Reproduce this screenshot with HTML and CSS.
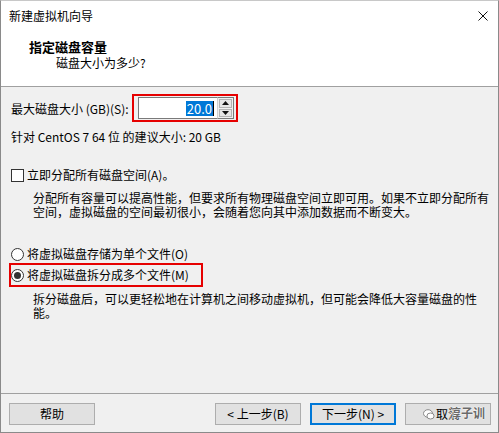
FILE: index.html
```html
<!DOCTYPE html>
<html>
  <head>
    <title>新建虚拟机向导</title>
    <link rel="stylesheet" href="styles.css">
  </head>
  <body>
    <div class="window">
      <div class="titlebar">
        <span class="caption">新建虚拟机向导</span>
        <svg class="close" width="10" height="10" viewBox="0 0 10 10">
          <path d="M0.5 0.5 L9.5 9.5 M9.5 0.5 L0.5 9.5" stroke="#111" stroke-width="1" fill="none" />
        </svg>
      </div>

      <div class="header">
        <h1 class="title">指定磁盘容量</h1>
        <p class="subtitle">磁盘大小为多少?</p>
      </div>

      <div class="content">
        <div class="size-row">
          <span class="label">最大磁盘大小 (GB)(S):</span>
          <div class="mark">
            <div class="spinbox">
              <div class="edit"><span class="selected">20.0</span><span class="caret"></span></div>
              <div class="spin">
                <div class="spin-btn">
                  <svg width="7" height="4" viewBox="0 0 7 4"><path d="M3.5 0 L7 4 L0 4 Z" fill="#111" /></svg>
                </div>
                <div class="spin-btn">
                  <svg width="7" height="4" viewBox="0 0 7 4"><path d="M0 0 L7 0 L3.5 4 Z" fill="#111" /></svg>
                </div>
              </div>
            </div>
          </div>
        </div>

        <p class="hint">针对 CentOS 7 64 位 的建议大小: 20 GB</p>

        <div class="option check-row">
          <span class="checkbox"></span>
          <span>立即分配所有磁盘空间(A)。</span>
        </div>
        <p class="desc">分配所有容量可以提高性能，但要求所有物理磁盘空间立即可用。如果不立即分配所有空间，虚拟磁盘的空间最初很小，会随着您向其中添加数据而不断变大。</p>

        <div class="option radio-row first">
          <span class="radio"></span>
          <span>将虚拟磁盘存储为单个文件(O)</span>
        </div>
        <div class="radio-mark">
          <div class="option radio-row">
            <span class="radio checked"></span>
            <span>将虚拟磁盘拆分成多个文件(M)</span>
          </div>
        </div>
        <p class="desc second">拆分磁盘后，可以更轻松地在计算机之间移动虚拟机，但可能会降低大容量磁盘的性能。</p>
      </div>

      <div class="footer">
        <button class="btn">帮助</button>
        <div class="spacer"></div>
        <button class="btn">&lt; 上一步(B)</button>
        <button class="btn default">下一步(N) &gt;</button>
        <button class="btn cancel">取消
          <svg class="wm-icon" width="12" height="11" viewBox="0 0 12 11">
            <ellipse cx="5" cy="4.5" rx="4.5" ry="3.8" fill="#fff" stroke="#8a8a8a" stroke-width="1" />
            <ellipse cx="7.5" cy="7" rx="3.6" ry="3" fill="#fff" stroke="#8a8a8a" stroke-width="1" />
          </svg>
          <span class="wm-text">淳子训</span>
        </button>
      </div>
    </div>
  </body>
</html>
```

FILE: styles.css
```css
body {
  margin: 0;
  font-family: "Noto Sans CJK SC", "Liberation Sans", sans-serif;
  font-size: 12px;
  color: #000;
}

.window {
  box-sizing: border-box;
  width: 499px;
  height: 433px;
  border: 1px solid #8a8a8a;
  border-top-color: #c8c8c8;
  display: flex;
  flex-direction: column;
  background: #f0f0f0;
}

.titlebar {
  height: 29px;
  background: #fff;
  display: flex;
  align-items: center;
  padding: 0 10px 0 8px;
}

.caption {
  flex: 1;
  line-height: 16px;
}

.close {
  display: block;
}

.header {
  background: #fff;
  border-bottom: 1px solid #a0a0a0;
  height: 57px;
  box-sizing: border-box;
  padding: 8px 0 0 28px;
}

.title {
  margin: 0;
  font-size: 13px;
  font-weight: bold;
  line-height: 17px;
}

.subtitle {
  margin: 0 0 0 27px;
  line-height: 16px;
}

.content {
  flex: 1;
  padding: 7px 7px 0 10px;
}

.size-row {
  display: flex;
  align-items: center;
}

.label {
  line-height: 16px;
  padding-top: 2px;
  width: 121px;
}

.mark {
  border: 2px solid #e60000;
  padding: 1px 2px 1px 4px;
}

.spinbox {
  display: flex;
  height: 22px;
}

.edit {
  width: 79px;
  box-sizing: border-box;
  border: 1px solid #7a7a7a;
  border-right: none;
  background: #fff;
  display: flex;
  justify-content: flex-end;
  align-items: center;
  padding-right: 3px;
}

.selected {
  background: #0078d7;
  color: #fff;
  font-size: 13px;
  line-height: 15px;
  padding: 0 1px;
}

.caret {
  width: 1px;
  height: 15px;
  background: #000;
}

.spin {
  width: 17px;
  box-sizing: border-box;
  border: 1px solid #7a7a7a;
  border-left: 1px solid #d0d0d0;
  background: #f0f0f0;
  display: flex;
  flex-direction: column;
  padding: 1px;
  gap: 1px;
}

.spin-btn {
  flex: 1;
  background: #e6e6e6;
  border: 1px solid #b4b4b4;
  display: flex;
  align-items: center;
  justify-content: center;
}

.spin-btn svg {
  display: block;
}

.hint {
  margin: 7px 0 0 0;
  line-height: 16px;
}

.option {
  display: flex;
  align-items: center;
  gap: 3px;
  line-height: 16px;
}

.check-row {
  margin-top: 22px;
}

.checkbox {
  width: 11px;
  height: 11px;
  border: 1px solid #333;
  background: #fff;
}

.desc {
  margin: 8px 0 0 22px;
  line-height: 14px;
}

.radio-row.first {
  margin-top: 27px;
}

.radio {
  width: 11px;
  height: 11px;
  border: 1px solid #333;
  border-radius: 50%;
  background: #fff;
  display: flex;
  align-items: center;
  justify-content: center;
}

.radio.checked::after {
  content: "";
  width: 7px;
  height: 7px;
  border-radius: 50%;
  background: #333;
}

.radio-mark {
  display: inline-block;
  margin: 1px 0 0 -2px;
  border: 2px solid #e60000;
  padding: 2px 12px 2px 0;
}

.desc.second {
  margin-top: 5px;
  width: 450px;
}

.footer {
  height: 39px;
  border-top: 1px solid #a0a0a0;
  box-sizing: border-box;
  display: flex;
  padding: 9px 7px 0 8px;
  gap: 9px;
  align-items: flex-start;
}

.spacer {
  flex: 1;
}

.btn {
  width: 86px;
  height: 22px;
  box-sizing: border-box;
  border: 1px solid #adadad;
  background: #e1e1e1;
  font-family: inherit;
  font-size: 12px;
  color: #000;
  padding: 0;
  line-height: 16px;
}

.btn.default {
  border: 2px solid #0078d7;
}

.cancel {
  position: relative;
}

.wm-icon {
  position: absolute;
  left: 17px;
  top: 5px;
}

.wm-text {
  position: absolute;
  left: 43px;
  top: 2px;
  color: #6a6a6a;
  font-weight: bold;
  font-size: 12px;
  line-height: 14px;
  text-shadow: 0 0 1px #fff, 0 0 1px #fff, 0 0 2px #fff;
}
```
